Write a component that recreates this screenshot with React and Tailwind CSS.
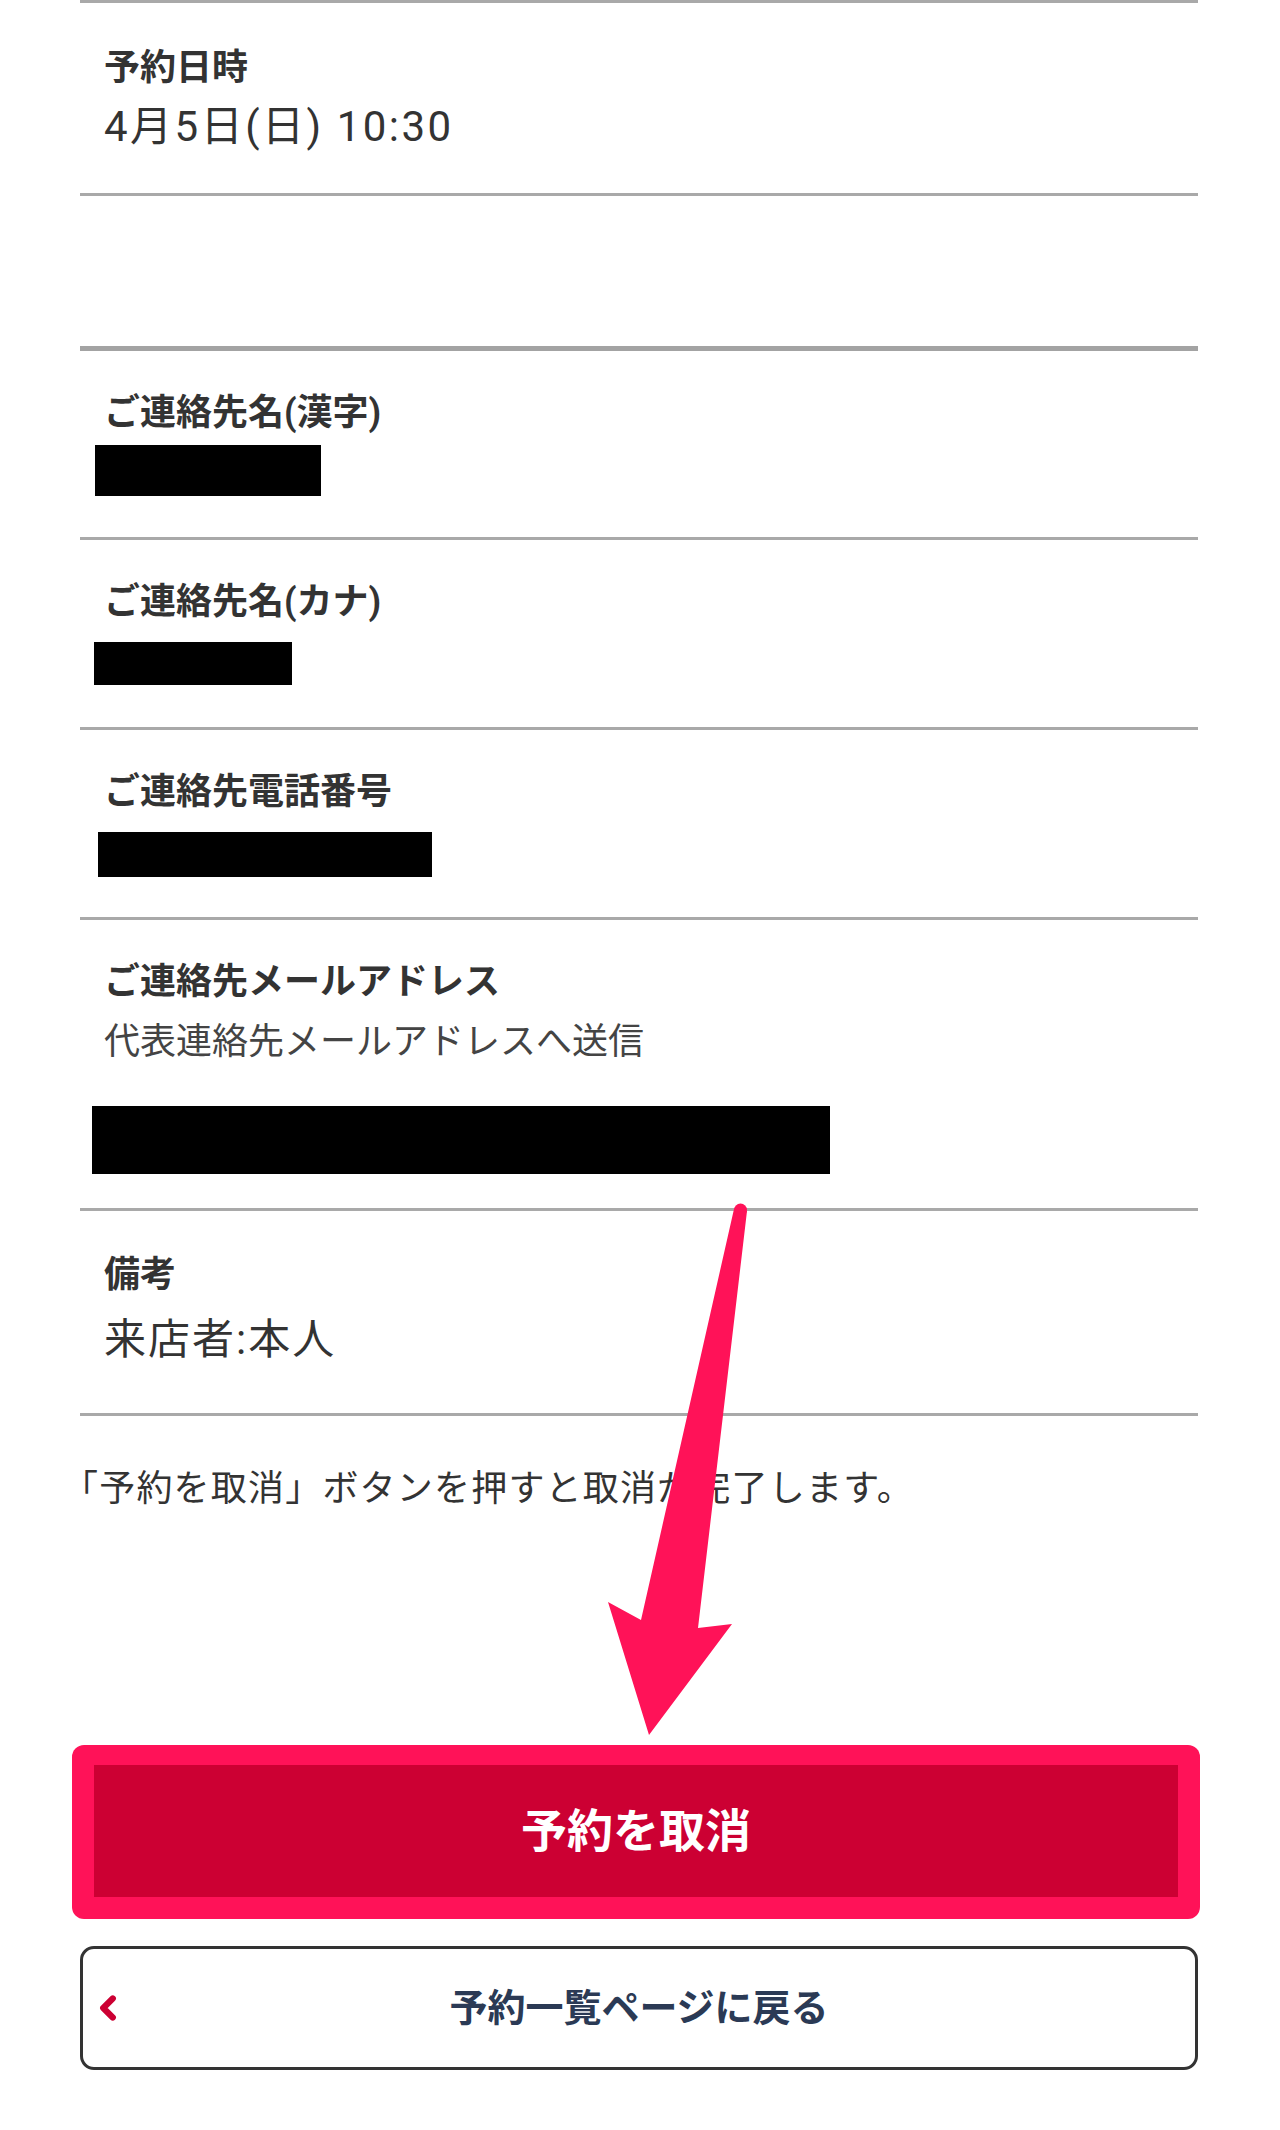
import { FiChevronLeft } from 'react-icons/fi';

const rows = [
  { label: 'ご連絡先名(漢字)', pt: 'pt-[37px]', mask: 'mt-[7px] ml-[15px] w-[226px] h-[51px]', pb: 'pb-[41px]' },
  { label: 'ご連絡先名(カナ)', pt: 'pt-[37px]', mask: 'mt-[15px] ml-[14px] w-[198px] h-[43px]', pb: 'pb-[42px]' },
  { label: 'ご連絡先電話番号', pt: 'pt-[37px]', mask: 'mt-[15px] ml-[18px] w-[334px] h-[45px]', pb: 'pb-[40px]' },
];

const Label = ({ children }) => (
  <div className="pl-[24px] text-[36px] leading-[50px] font-bold text-[#333]">{children}</div>
);

const Redacted = ({ className }) => <div className={`bg-black ${className}`} />;

// hand-drawn pointer over the cancel button
const Arrow = () => (
  <svg
    className="absolute top-0 left-0 pointer-events-none"
    width="1280"
    height="2130"
    viewBox="0 0 1280 2130"
  >
    <polygon
      fill="#ff1258"
      points="734,1209 747,1211 698,1628 732,1624 649,1735 608,1602 641,1620"
    />
    <circle cx="740.5" cy="1210" r="6.5" fill="#ff1258" />
  </svg>
);

export default function App() {
  return (
    <div className="relative w-[1280px] min-h-[2130px] bg-white font-['Roboto','Noto_Sans_CJK_JP',sans-serif]">
      <div className="ml-[80px] w-[1118px] pb-[59px]">
        {/* reservation date */}
        <div className="border-t-[3px] border-b-[3px] border-[#a9a9a9] pt-[40px] pb-[38px]">
          <Label>予約日時</Label>
          <div className="mt-[6px] pl-[24px] text-[42px] leading-[56px] tracking-[2.5px] text-[#333]">4月5日(日) 10:30</div>
        </div>

        <div className="h-[155px] border-b-[5px] border-[#a3a3a3]" />

        {rows.map((r) => (
          <div key={r.label} className={`border-b-[3px] border-[#a9a9a9] ${r.pt} ${r.pb}`}>
            <Label>{r.label}</Label>
            <Redacted className={r.mask} />
          </div>
        ))}

        {/* mail address */}
        <div className="border-b-[3px] border-[#a9a9a9] pt-[37px] pb-[34px]">
          <Label>ご連絡先メールアドレス</Label>
          <div className="mt-[10px] pl-[24px] text-[36px] leading-[50px] text-[#444]">代表連絡先メールアドレスへ送信</div>
          <Redacted className="mt-[39px] ml-[12px] w-[738px] h-[68px]" />
        </div>

        {/* notes */}
        <div className="border-b-[3px] border-[#a9a9a9] pt-[39px] pb-[45px]">
          <Label>備考</Label>
          <div className="mt-[12px] pl-[24px] text-[42px] leading-[56px] tracking-[2px] text-[#333]">来店者:本人</div>
        </div>

        <p className="mt-[48px] -ml-[18px] text-[36px] leading-[50px] tracking-[1.2px] text-[#333]">
          「予約を取消」ボタンを押すと取消が完了します。
        </p>

        {/* cancel button, outlined */}
        <div className="mt-[231px] -ml-[8px] w-[1128px] rounded-[12px] bg-[#ff1258] pt-[20px] pb-[22px] px-[22px]">
          <button className="w-full h-[132px] bg-[#cc0033] flex items-center justify-center text-white text-[46px] font-bold">
            予約を取消
          </button>
        </div>

        {/* back to list */}
        <button className="relative mt-[27px] w-full h-[124px] rounded-[14px] border-[3px] border-[#333] bg-white flex items-center justify-center text-[38px] font-bold text-[#2b3a55]">
          <FiChevronLeft className="absolute left-[6px] top-1/2 -translate-y-1/2 w-[38px] h-[38px] text-[#cc0033]" strokeWidth={4} />
          予約一覧ページに戻る
        </button>
      </div>
      <Arrow />
    </div>
  );
}
